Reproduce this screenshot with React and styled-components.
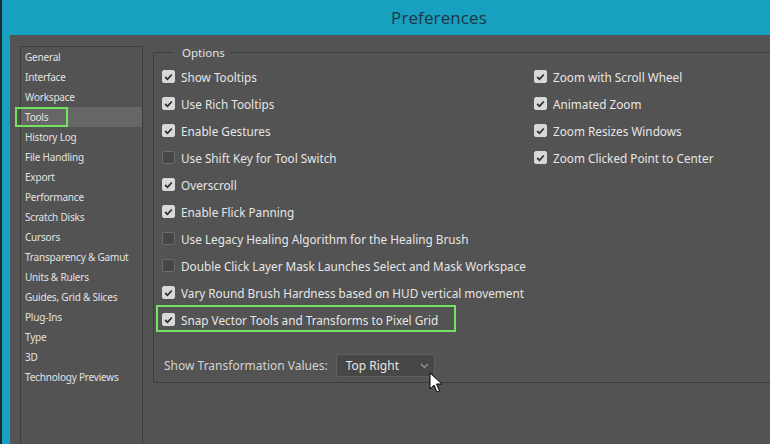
import styled, { createGlobalStyle } from "styled-components";

const GlobalStyle = createGlobalStyle`
  html, body {
    margin: 0;
    padding: 0;
    background: #18a0c0;
  }
  body {
    font-family: "Noto Sans", "DejaVu Sans", sans-serif;
  }
`;

const sections = [
  "General",
  "Interface",
  "Workspace",
  "Tools",
  "History Log",
  "File Handling",
  "Export",
  "Performance",
  "Scratch Disks",
  "Cursors",
  "Transparency & Gamut",
  "Units & Rulers",
  "Guides, Grid & Slices",
  "Plug-Ins",
  "Type",
  "3D",
  "Technology Previews",
];

const leftOptions = [
  { label: "Show Tooltips", checked: true },
  { label: "Use Rich Tooltips", checked: true },
  { label: "Enable Gestures", checked: true },
  { label: "Use Shift Key for Tool Switch", checked: false },
  { label: "Overscroll", checked: true },
  { label: "Enable Flick Panning", checked: true },
  { label: "Use Legacy Healing Algorithm for the Healing Brush", checked: false },
  { label: "Double Click Layer Mask Launches Select and Mask Workspace", checked: false },
  { label: "Vary Round Brush Hardness based on HUD vertical movement", checked: true },
  { label: "Snap Vector Tools and Transforms to Pixel Grid", checked: true, marked: true },
];

const rightOptions = [
  { label: "Zoom with Scroll Wheel", checked: true },
  { label: "Animated Zoom", checked: true },
  { label: "Zoom Resizes Windows", checked: true },
  { label: "Zoom Clicked Point to Center", checked: true },
];

export default function App() {
  return (
    <Window>
      <GlobalStyle />
      <TitleBar>
        <Title>Preferences</Title>
      </TitleBar>
      <Body>
        <Sidebar>
          {sections.map((name) => (
            <NavItem key={name} active={name === "Tools"}>
              {name}
              {name === "Tools" && <NavMark />}
            </NavItem>
          ))}
        </Sidebar>
        <Content>
          <Group>
            <Legend>Options</Legend>
            <Columns>
              <Column>
                {leftOptions.map((opt) => (
                  <Option key={opt.label} marked={opt.marked}>
                    <Check checked={opt.checked} />
                    {opt.label}
                  </Option>
                ))}
              </Column>
              <Column>
                {rightOptions.map((opt) => (
                  <Option key={opt.label}>
                    <Check checked={opt.checked} />
                    {opt.label}
                  </Option>
                ))}
              </Column>
            </Columns>
            <SelectRow>
              <SelectLabel>Show Transformation Values:</SelectLabel>
              <Select>
                Top Right
                <svg width="9" height="6" viewBox="0 0 9 6">
                  <path d="M1 1l3.5 3.5L8 1" fill="none" stroke="#9a9a9a" strokeWidth="1.2" />
                </svg>
                <Pointer width="14" height="21" viewBox="0 0 14 21">
                  <path
                    d="M1 1v16l4-4 3 7 2.5-1-3-7H13z"
                    fill="#fff"
                    stroke="#000"
                    strokeWidth="1"
                    strokeLinejoin="round"
                  />
                </Pointer>
              </Select>
            </SelectRow>
          </Group>
        </Content>
      </Body>
    </Window>
  );
}

function Check({ checked }) {
  return (
    <Box checked={checked}>
      {checked && (
        <svg width="9" height="8" viewBox="0 0 9 8">
          <path d="M1.2 4l2.3 2.3L7.8 1.5" fill="none" stroke="#2f2f2f" strokeWidth="1.8" />
        </svg>
      )}
    </Box>
  );
}

const Window = styled.div`
  width: 770px;
  height: 444px;
  overflow: hidden;
  background: #18a0c0;
  border-left: 2px solid #1d2b33;
  box-sizing: border-box;
  display: flex;
  flex-direction: column;
`;

const TitleBar = styled.div`
  height: 35px;
  flex-shrink: 0;
  display: flex;
  align-items: center;
  justify-content: center;
  padding-left: 106px;
`;

const Title = styled.div`
  font-family: "Open Sans", "Noto Sans", sans-serif;
  font-size: 17px;
  color: #1d3644;
  letter-spacing: 0.1px;
`;

const Body = styled.div`
  flex: 1;
  margin-left: 8px;
  background: #535353;
  display: flex;
  align-items: flex-start;
  padding: 11px 0 0 10px;
`;

const Sidebar = styled.div`
  width: 123px;
  height: 420px;
  flex-shrink: 0;
  border: 1px solid #3d3d3d;
  border-bottom: none;
  box-sizing: border-box;
`;

const NavItem = styled.div`
  position: relative;
  height: 20px;
  line-height: 20px;
  padding-left: 4px;
  font-size: 10px;
  letter-spacing: -0.2px;
  color: #e2e2e2;
  white-space: nowrap;
  background: ${(p) => (p.active ? "#666666" : "transparent")};
`;

const NavMark = styled.span`
  position: absolute;
  left: -6px;
  top: 0;
  width: 53px;
  height: 20px;
  box-sizing: border-box;
  border: 2px solid #72e260;
`;

const Content = styled.div`
  flex: 1;
  padding-left: 10px;
  margin-top: -1px;
`;

const Group = styled.fieldset`
  margin: 0 -20px 0 0;
  padding: 3px 0 0 8px;
  height: 338px;
  box-sizing: border-box;
  border: 1px solid #3d3d3d;
  border-right: none;
  min-width: 0;
`;

const Legend = styled.legend`
  margin-left: 12px;
  padding: 0 6px 0 8px;
  font-size: 11.5px;
  color: #e2e2e2;
`;

const Columns = styled.div`
  display: grid;
  grid-template-columns: 372px 1fr;
`;

const Column = styled.div`
  display: flex;
  flex-direction: column;
`;

const Option = styled.div`
  position: relative;
  height: 27px;
  display: flex;
  align-items: center;
  gap: 6px;
  font-size: 11.75px;
  color: #e6e6e6;
  white-space: nowrap;

  ${(p) =>
    p.marked &&
    `
    &::before {
      content: "";
      position: absolute;
      left: -6px;
      top: -1px;
      width: 300px;
      height: 27px;
      box-sizing: border-box;
      border: 2px solid #72e260;
    }
  `}
`;

const Box = styled.span`
  width: 13px;
  height: 13px;
  flex-shrink: 0;
  box-sizing: border-box;
  border-radius: 2px;
  display: inline-flex;
  align-items: center;
  justify-content: center;
  background: ${(p) => (p.checked ? "#d8d8d8" : "#464646")};
  border: 1px solid ${(p) => (p.checked ? "#d8d8d8" : "#6c6c6c")};
`;

const SelectRow = styled.div`
  display: flex;
  align-items: center;
  gap: 8px;
  margin-top: 21px;
  padding-left: 2px;
`;

const SelectLabel = styled.span`
  font-size: 12px;
  color: #d2d2d2;
`;

const Select = styled.div`
  position: relative;
  width: 99px;
  height: 23px;
  box-sizing: border-box;
  border: 1px solid #5f5f5f;
  border-radius: 2px;
  background: #474747;
  display: flex;
  align-items: center;
  justify-content: space-between;
  padding: 0 5px 0 9px;
  font-size: 12px;
  color: #e6e6e6;
`;

const Pointer = styled.svg`
  position: absolute;
  left: 92px;
  top: 17px;
`;
